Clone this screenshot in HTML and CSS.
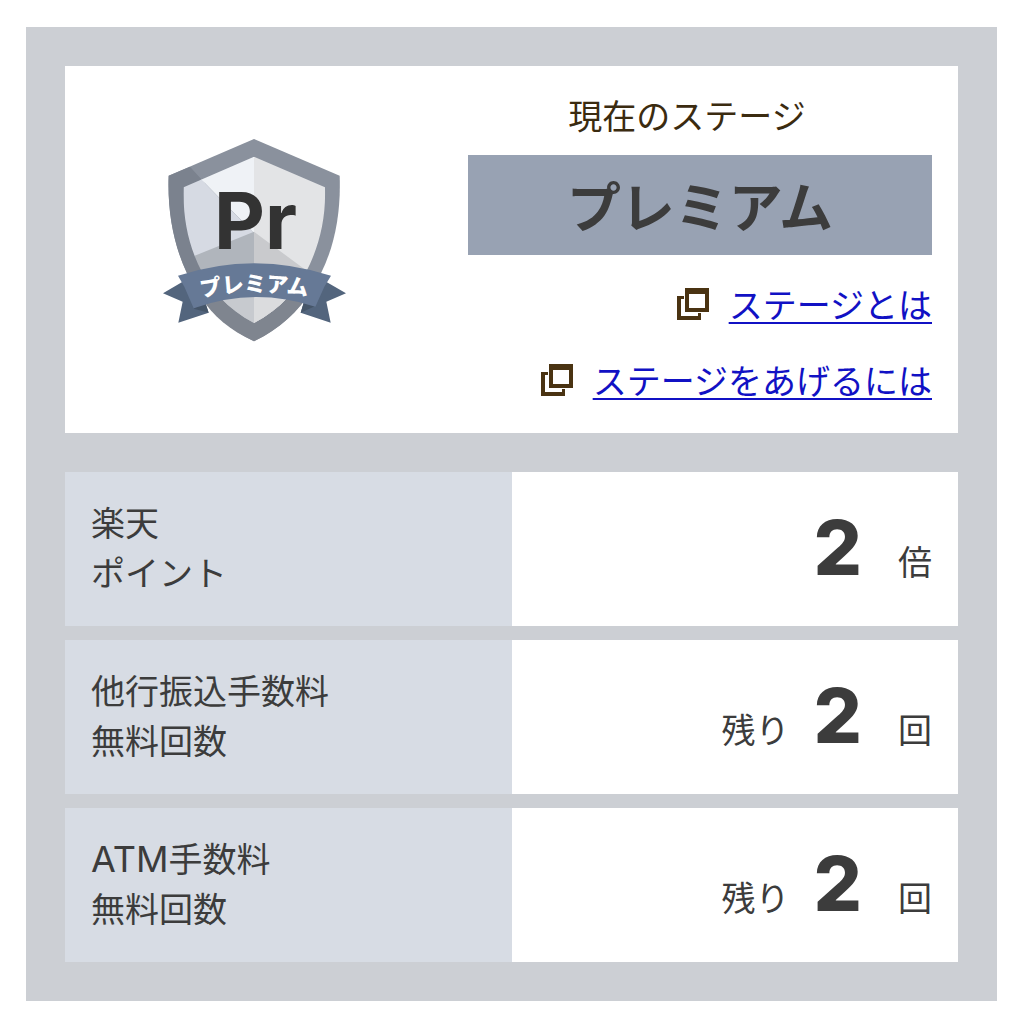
FILE: index.html
```html
<!DOCTYPE html>
<html lang="ja">
<head>
  <meta charset="UTF-8" />
  <meta name="viewport" content="width=device-width, initial-scale=1.0"/>
  <title>現在のステージ</title>
  <link rel="stylesheet" href="styles.css">
</head>
<body>

<main class="panel">
  <section class="card">
    <div class="badge">
      <svg class="badge-icon" viewBox="-3 0 630 660" role="img" aria-label="プレミアム">
        <defs>
          <clipPath id="inner">
            <path d="M312 80 L525 172 C528 260 510 335 480 402 C446 478 392 536 312 579 C232 536 178 478 144 402 C114 335 98 260 101 172 Z"/>
          </clipPath>
          <path id="curve" d="M154 502 Q312 468 490 502"/>
        </defs>
        <!-- shield -->
        <path fill="#8a919d" d="M312 27 L569 137 C573 245 555 345 513 430 C467 523 405 588 312 634 C219 588 157 523 111 430 C71 345 52 245 56 137 Z"/>
        <path fill="#7b828e" d="M120 110 L56 137 C52 245 71 345 111 430 L150 497 L312 310 L165 160 Z"/>
        <path fill="#7f858f" d="M150 497 C190 560 240 600 312 634 C390 596 445 545 485 480 L312 480 Z"/>
        <g clip-path="url(#inner)">
          <path fill="#e3e4e6" d="M312 60 H560 V600 H312 Z"/>
          <path fill="#eff2f6" d="M312 60 V310 L165 160 L90 100 Z"/>
          <path fill="#d6dae3" d="M90 80 L165 160 L312 310 L90 400 Z"/>
          <path fill="#b0b5bc" d="M312 305 L120 383 V600 H312 Z"/>
          <path fill="#c9cacd" d="M312 305 L480 430 V600 H312 Z"/>
          <path fill="#c7cacf" d="M130 490 H312 V600 H130 Z"/>
          <path fill="#dbdcde" d="M312 490 H510 V600 H312 Z"/>
        </g>
        <text class="badge-mark" x="192" y="358">Pr</text>
        <!-- ribbon -->
        <path fill="#53657d" d="M103 452 L39 490 L98 515 L85 578 L176 548 L165 515 Z"/>
        <path fill="#53657d" d="M523 452 L588 490 L529 515 L542 578 L452 548 L462 515 Z"/>
        <path fill="#465669" d="M131 536 L165 515 L176 548 Z M496 528 L462 515 L452 548 Z"/>
        <path fill="#667996" d="M84 437 Q312 362 543 437 L523 470 L496 530 Q312 470 131 535 L103 470 Z"/>
        <text class="badge-name"><textPath href="#curve">プレミアム</textPath></text>
      </svg>
    </div>

    <div class="stage">
      <h1 class="stage-title">現在のステージ</h1>
      <p class="stage-name">プレミアム</p>
      <ul class="links">
        <li>
          <svg class="window-icon" viewBox="0 0 32 32" aria-hidden="true">
            <path d="M0 8 H7 V11 H4 V28 H21 V25 H24 V32 H0 Z"/>
            <path fill-rule="evenodd" d="M8 0 H32 V24 H8 Z M12 6 V20 H28 V6 Z"/>
          </svg>
          <a href="#">ステージとは</a>
        </li>
        <li>
          <svg class="window-icon" viewBox="0 0 32 32" aria-hidden="true">
            <path d="M0 8 H7 V11 H4 V28 H21 V25 H24 V32 H0 Z"/>
            <path fill-rule="evenodd" d="M8 0 H32 V24 H8 Z M12 6 V20 H28 V6 Z"/>
          </svg>
          <a href="#">ステージをあげるには</a>
        </li>
      </ul>
    </div>
  </section>

  <table class="benefits">
    <tbody>
      <tr>
        <th scope="row">楽天<br>ポイント</th>
        <td><div class="value"><strong>2</strong><span>倍</span></div></td>
      </tr>
      <tr>
        <th scope="row">他行振込手数料<br>無料回数</th>
        <td><div class="value"><span>残り</span><strong>2</strong><span>回</span></div></td>
      </tr>
      <tr>
        <th scope="row"><span class="latin">ATM</span>手数料<br>無料回数</th>
        <td><div class="value"><span>残り</span><strong>2</strong><span>回</span></div></td>
      </tr>
    </tbody>
  </table>
</main>

</body>
</html>
```
FILE: styles.css
```css
* {
  box-sizing: border-box;
}
body {
  margin: 0;
  padding: 27px 25px 23px 26px;
  background: #fff;
  color: #3c3c3c;
  font-family: "Noto Sans CJK JP", sans-serif;
  font-size: 34px;
  line-height: 50px;
}
.panel {
  padding: 39px;
  background: #cccfd4;
}
.card {
  display: grid;
  grid-template-columns: 13fr 16fr;
  gap: 26px;
  margin-bottom: 39px;
  padding: 24px 26px 28px 0;
  background: #fff;
}
.badge {
  padding-top: 40px;
  text-align: center;
}
.badge-icon {
  width: 210px;
  max-width: 100%;
}
.badge-mark {
  font: 700 236px Inter, sans-serif;
  fill: #333;
}
.badge-name {
  font-size: 65px;
  font-weight: 900;
  fill: #fff;
}
.stage-title {
  margin: 0 0 15px;
  padding-right: 26px;
  color: #3b2b10;
  font-size: 34px;
  font-weight: 400;
  text-align: center;
}
.stage-name {
  margin: 0;
  background: #98a2b3;
  font-size: 54px;
  font-weight: 700;
  line-height: 100px;
  text-align: center;
}
.links {
  display: grid;
  gap: 26px;
  margin: 24px 0 0;
  padding: 0;
  list-style: none;
}
.links li {
  display: flex;
  justify-content: flex-end;
  align-items: center;
  gap: 20px;
}
.links a {
  color: #1111c4;
  text-decoration-thickness: 2px;
  text-underline-offset: 4px;
}
.window-icon {
  width: 32px;
  height: 32px;
  fill: #4a3312;
}
.benefits {
  width: 100%;
  table-layout: fixed;
  border-spacing: 0;
}
.benefits th,
.benefits td {
  padding: 25px 26px 29px;
  border-bottom: 14px solid #cccfd4;
}
.benefits tr:last-child th,
.benefits tr:last-child td {
  border-bottom: 0;
}
.benefits th {
  background: #d7dce4;
  font-weight: 400;
  text-align: left;
}
.benefits td {
  background: #fff;
}
.latin {
  font-family: Inter, sans-serif;
  font-size: 36px;
  line-height: 1;
}
.value {
  display: flex;
  justify-content: flex-end;
  align-items: baseline;
}
.value strong {
  margin: 0 36px 0 24px;
  font: 800 76px/100px Inter, sans-serif;
}
```
